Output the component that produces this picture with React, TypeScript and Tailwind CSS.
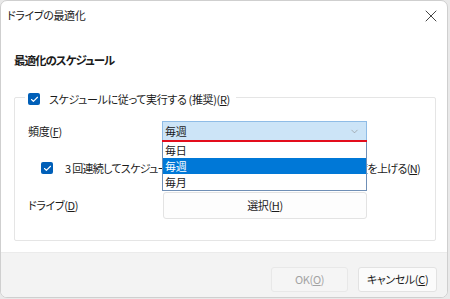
import { Check, X, ChevronDown } from 'lucide-react';

const font = "font-['Yu_Gothic_UI','Noto_Sans_CJK_JP',sans-serif] [font-feature-settings:'palt']";

function CheckBox() {
  return (
    <span className="w-[12px] h-[12px] rounded-[2px] bg-[#005fb8] flex items-center justify-center shrink-0">
      <Check size={9} strokeWidth={3} className="text-white" />
    </span>
  );
}

export default function App() {
  const options = ['毎日', '毎週', '毎月'];
  const selected = '毎週';

  return (
    <div className={`w-[450px] h-[299px] bg-[#e9e9e9] overflow-hidden text-[#1b1b1b] text-[11px] tracking-[-0.35px] ${font}`}>
      <div className="w-[448px] h-[298px] bg-white rounded-[7px] border border-[#cfcfcf] flex flex-col overflow-hidden">
        {/* Title bar */}
        <div className="h-[29px] flex items-center justify-between pl-[6px] pr-[6px] shrink-0">
          <span>ドライブの最適化</span>
          <X size={20} strokeWidth={1.1} className="text-[#333]" />
        </div>

        {/* Body */}
        <div className="flex-1 pl-[13px] pr-[11px]">
          <h2 className="mt-[22px] text-[11.5px] tracking-[-1px] font-bold leading-[16px]">最適化のスケジュール</h2>

          <div className="relative mt-[29px] h-[144px] border border-[#e5e5e5] rounded-[2px]">
            <label className="absolute left-[10px] -top-[6px] bg-white pl-[3px] pr-[6px] flex items-center gap-[9px] leading-[14px]">
              <CheckBox />
              <span>
                スケジュールに従って実行する (推奨)(<span className="underline">R</span>)
              </span>
            </label>

            <div className="pt-[24px] pl-[13px] pr-[68px] flex flex-col">
              <div className="flex items-center justify-between h-[19px]">
                <span>頻度(<span className="underline">F</span>)</span>
                <div className="relative w-[205px]">
                  <div className="h-[19px] bg-[#cce4f7] border border-[#8fbce6] border-b-0 flex items-center justify-between pl-[2px] pr-[6px]">
                    <span>{selected}</span>
                    <ChevronDown size={11} strokeWidth={1.3} className="text-[#888]" />
                  </div>
                  <div className="h-[2px] bg-[#e30d1c]" />
                  {/* Open dropdown list */}
                  <ul className="absolute left-0 top-[21px] w-[205px] bg-white border border-[#6f8fb6] border-t-0 z-10 leading-[16px]">
                    {options.map((o) => (
                      <li
                        key={o}
                        className={o === selected ? 'bg-[#0078d7] text-white pl-[2px]' : 'pl-[2px]'}
                      >
                        {o}
                      </li>
                    ))}
                  </ul>
                </div>
              </div>

              <div className="mt-[20px] pl-[13px] flex items-center gap-[12px] h-[14px] whitespace-nowrap">
                <CheckBox />
                <span className="tracking-[-0.68px]">
                  3 回連続してスケジュールされた実行が行われなかった場合に優先度を上げる(<span className="underline">N</span>)
                </span>
              </div>

              <div className="mt-[17px] flex items-center justify-between">
                <span>ドライブ(<span className="underline">D</span>)</span>
                <button className="w-[204px] h-[27px] bg-[#fdfdfd] border border-[#e3e3e3] rounded-[3px]">
                  選択(<span className="underline">H</span>)
                </button>
              </div>
            </div>
          </div>
        </div>

        {/* Footer */}
        <div className="h-[45px] shrink-0 bg-[#f3f3f3] border-t border-[#ebebeb] flex items-start justify-end gap-[10px] pt-[14px] pr-[10px]">
          <button className="w-[77px] h-[25px] bg-[#f5f5f5] border border-[#e8e8e8] rounded-[3px] text-[#a3a3a3]">
            OK(<span className="underline">O</span>)
          </button>
          <button className="w-[79px] h-[25px] bg-[#fbfbfb] border border-[#e2e2e2] rounded-[3px]">
            キャンセル(<span className="underline">C</span>)
          </button>
        </div>
      </div>
    </div>
  );
}
